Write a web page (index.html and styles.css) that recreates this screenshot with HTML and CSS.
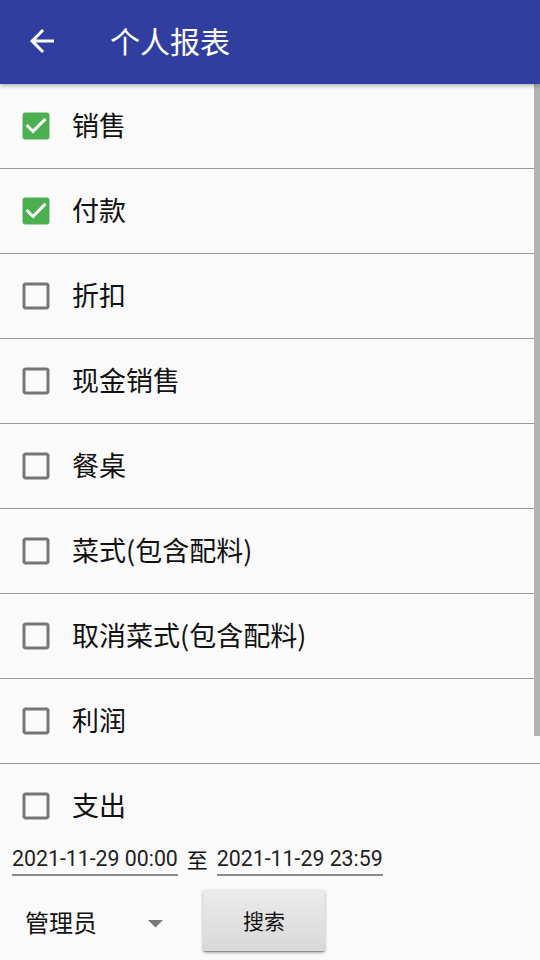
FILE: index.html
```html
<!DOCTYPE html>
<html lang="zh">
<head>
<meta charset="utf-8">
<link rel="stylesheet" href="styles.css">
</head>
<body>
<header class="appbar">
  <svg class="back" viewBox="0 0 24 24"><path d="M20 11H7.83l5.59-5.59L12 4l-8 8 8 8 1.41-1.41L7.83 13H20v-2z" fill="#fff"/></svg>
  <h1 class="title">个人报表</h1>
</header>
<main class="list">
  <div class="row"><svg class="cb" viewBox="0 0 24 24"><rect x="3" y="3" width="18" height="18" rx="2" fill="#4caf50"/><path d="M10 17l-5-5 1.41-1.41L10 14.17l7.59-7.59L19 8l-9 9z" fill="#fff"/></svg><span class="label">销售</span></div>
  <div class="row"><svg class="cb" viewBox="0 0 24 24"><rect x="3" y="3" width="18" height="18" rx="2" fill="#4caf50"/><path d="M10 17l-5-5 1.41-1.41L10 14.17l7.59-7.59L19 8l-9 9z" fill="#fff"/></svg><span class="label">付款</span></div>
  <div class="row"><svg class="cb" viewBox="0 0 24 24"><path d="M19 5v14H5V5h14m0-2H5c-1.1 0-2 .9-2 2v14c0 1.1.9 2 2 2h14c1.1 0 2-.9 2-2V5c0-1.1-.9-2-2-2z" fill="#757575"/></svg><span class="label">折扣</span></div>
  <div class="row"><svg class="cb" viewBox="0 0 24 24"><path d="M19 5v14H5V5h14m0-2H5c-1.1 0-2 .9-2 2v14c0 1.1.9 2 2 2h14c1.1 0 2-.9 2-2V5c0-1.1-.9-2-2-2z" fill="#757575"/></svg><span class="label">现金销售</span></div>
  <div class="row"><svg class="cb" viewBox="0 0 24 24"><path d="M19 5v14H5V5h14m0-2H5c-1.1 0-2 .9-2 2v14c0 1.1.9 2 2 2h14c1.1 0 2-.9 2-2V5c0-1.1-.9-2-2-2z" fill="#757575"/></svg><span class="label">餐桌</span></div>
  <div class="row"><svg class="cb" viewBox="0 0 24 24"><path d="M19 5v14H5V5h14m0-2H5c-1.1 0-2 .9-2 2v14c0 1.1.9 2 2 2h14c1.1 0 2-.9 2-2V5c0-1.1-.9-2-2-2z" fill="#757575"/></svg><span class="label">菜式(包含配料)</span></div>
  <div class="row"><svg class="cb" viewBox="0 0 24 24"><path d="M19 5v14H5V5h14m0-2H5c-1.1 0-2 .9-2 2v14c0 1.1.9 2 2 2h14c1.1 0 2-.9 2-2V5c0-1.1-.9-2-2-2z" fill="#757575"/></svg><span class="label">取消菜式(包含配料)</span></div>
  <div class="row"><svg class="cb" viewBox="0 0 24 24"><path d="M19 5v14H5V5h14m0-2H5c-1.1 0-2 .9-2 2v14c0 1.1.9 2 2 2h14c1.1 0 2-.9 2-2V5c0-1.1-.9-2-2-2z" fill="#757575"/></svg><span class="label">利润</span></div>
  <div class="row"><svg class="cb" viewBox="0 0 24 24"><path d="M19 5v14H5V5h14m0-2H5c-1.1 0-2 .9-2 2v14c0 1.1.9 2 2 2h14c1.1 0 2-.9 2-2V5c0-1.1-.9-2-2-2z" fill="#757575"/></svg><span class="label">支出</span></div>
  <div class="scrollthumb"></div>
</main>
<section class="daterow">
  <span class="datefield">2021-11-29 00:00</span>
  <span class="to">至</span>
  <span class="datefield">2021-11-29 23:59</span>
</section>
<section class="actions">
  <div class="spinner">
    <span class="spinner-text">管理员</span>
    <svg class="caret" viewBox="0 0 15 8"><path d="M0 0h15L7.5 7.5z" fill="#777"/></svg>
  </div>
  <button class="search">搜索</button>
</section>
</body>
</html>
```

FILE: styles.css
```css
* { box-sizing: border-box; }
html, body { margin: 0; padding: 0; }
body {
  width: 540px;
  height: 960px;
  overflow: hidden;
  background: #fafafa;
  font-family: "Noto Sans CJK SC", "Noto Sans", sans-serif;
  color: #111;
}
.appbar {
  position: relative;
  z-index: 2;
  height: 84px;
  background: #303f9f;
  display: flex;
  align-items: center;
  padding-left: 24px;
  box-shadow: 0 2px 4px rgba(0,0,0,0.28);
}
.back { width: 36px; height: 36px; margin-top: -2px; }
.title {
  margin: 0 0 5px 50px;
  font-size: 30px;
  font-weight: 400;
  color: #fff;
  line-height: 1;
}
.list {
  position: relative;
  height: 756px;
  overflow: hidden;
}
.row {
  height: 85px;
  border-bottom: 1px solid #9a9a9a;
  display: flex;
  align-items: center;
  padding-left: 18px;
}
.cb { width: 36px; height: 36px; flex: none; }
.label {
  margin-left: 18px;
  margin-bottom: 4px;
  font-size: 27px;
  line-height: 1;
  color: #111;
}
.scrollthumb {
  position: absolute;
  top: 0;
  right: 0;
  width: 6px;
  height: 652px;
  background: #b3b3b3;
}
.daterow {
  display: flex;
  align-items: flex-end;
  padding: 7px 12px 0;
  gap: 9px;
  font-family: Roboto, "Noto Sans CJK SC", sans-serif;
  font-size: 21.3px;
}
.datefield {
  line-height: 24px;
  padding-bottom: 3px;
  border-bottom: 2px solid #8a8a8a;
  color: #222;
}
.to {
  font-family: "Noto Sans CJK SC", sans-serif;
  font-size: 21px;
  line-height: 24px;
  padding-bottom: 5px;
  color: #111;
}
.actions {
  display: flex;
  align-items: center;
  margin-top: 13px;
  padding-left: 25px;
}
.spinner {
  width: 138px;
  display: flex;
  align-items: center;
  justify-content: space-between;
  padding-top: 4px;
}
.spinner-text { font-size: 24px; line-height: 1; color: #111; }
.caret { width: 15px; height: 8px; margin-top: 3px; }
.search {
  margin-left: 40px;
  width: 122px;
  height: 62px;
  border: none;
  border-radius: 3px;
  background: linear-gradient(#ececec, #d8d8d8);
  box-shadow: 0 1px 1px rgba(0,0,0,0.25), 0 2px 3px rgba(0,0,0,0.3);
  font-family: "Noto Sans CJK SC", sans-serif;
  font-size: 21px;
  color: #111;
  padding: 0;
}
```
